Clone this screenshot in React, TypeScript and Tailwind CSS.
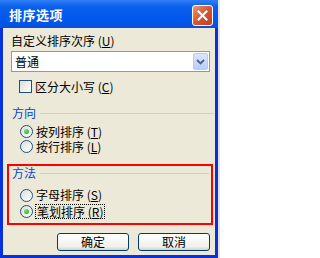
import React from "react";

const font = { fontFamily: '"Noto Sans CJK SC", "Noto Sans", sans-serif' };

function Mnemonic({ text, letter }: { text: string; letter: string }) {
  return (
    <span>
      {text} (<span className="underline underline-offset-1">{letter}</span>)
    </span>
  );
}

function Radio({ checked }: { checked?: boolean }) {
  return (
    <span className="w-[13px] h-[13px] rounded-full border border-[#1c5180] bg-[linear-gradient(135deg,#dcdcd7,#ffffff)] flex items-center justify-center shrink-0">
      {checked && (
        <span className="w-[5px] h-[5px] rounded-full bg-[radial-gradient(circle_at_35%_35%,#7be07b,#21a121)]" />
      )}
    </span>
  );
}

function GroupTitle({ label }: { label: string }) {
  return (
    <div className="flex items-center h-[14px] gap-[4px]">
      <span className="text-[#0046d5]">{label}</span>
      <span className="flex-1 h-px bg-[#d0d0bf] mr-[1px]" />
    </div>
  );
}

function Button({ label }: { label: string }) {
  return (
    <button className="w-[72px] h-[18px] rounded-[3px] border border-[#003c74] bg-[linear-gradient(to_bottom,#ffffff,#f0f0ea_80%,#d6d0c5)] text-[12px] leading-none text-black flex items-center justify-center">
      {label}
    </button>
  );
}

export default function App() {
  return (
    <div className="w-[220px] h-[258px] bg-[#e6e3f0] overflow-hidden text-[12px] leading-[14px] text-black" style={font}>
      <div className="w-[218px] h-[258px] bg-[#0831d9] flex flex-col">
        {/* Title bar */}
        <div className="h-[28px] flex items-center justify-between pl-[9px] pr-[5px] pt-[2px] bg-[linear-gradient(to_bottom,#2f7ff5,#0a5fec_25%,#0058ee_70%,#0a4fd8)]">
          <span className="text-white font-bold text-[13px] tracking-[0.5px]">排序选项</span>
          <span className="w-[21px] h-[21px] rounded-[3px] border border-white bg-[linear-gradient(135deg,#ec9a7c,#d4552f_50%,#c0401f)] flex items-center justify-center">
            <svg width="11" height="11" viewBox="0 0 11 11">
              <path d="M1.5 1.5 L9.5 9.5 M9.5 1.5 L1.5 9.5" stroke="white" strokeWidth="2" strokeLinecap="square" />
            </svg>
          </span>
        </div>

        {/* Client area */}
        <div className="flex-1 mx-[3px] mb-[3px] bg-[#ece9d8] flex flex-col">
          <div className="mt-[6px] ml-[8px] h-[14px]">
            <Mnemonic text="自定义排序次序" letter="U" />
          </div>

          {/* Combobox */}
          <div className="mt-[3px] ml-[8px] w-[199px] h-[21px] bg-white border border-[#7f9db9] flex items-center justify-between">
            <span className="ml-[3px]">普通</span>
            <span className="w-[15px] h-[17px] mr-[1px] rounded-[2px] border border-[#b9cbf3] bg-[linear-gradient(to_bottom,#dce6fd,#b6cdfb)] flex items-center justify-center">
              <svg width="9" height="6" viewBox="0 0 9 6">
                <path d="M1 1 L4.5 4.5 L8 1" fill="none" stroke="#4d6185" strokeWidth="1.8" />
              </svg>
            </span>
          </div>

          {/* Checkbox */}
          <div className="mt-[8px] ml-[16px] h-[13px] flex items-center gap-[3px]">
            <span className="w-[13px] h-[13px] border border-[#1c5180] bg-[linear-gradient(135deg,#dcdcd7,#ffffff)] shrink-0" />
            <Mnemonic text="区分大小写" letter="C" />
          </div>

          {/* Direction */}
          <div className="mt-[13px] ml-[9px]">
            <GroupTitle label="方向" />
          </div>
          <div className="mt-[4px] ml-[17px] h-[15px] flex items-center gap-[3px]">
            <Radio checked />
            <Mnemonic text="按列排序" letter="T" />
          </div>
          <div className="ml-[17px] h-[15px] flex items-center gap-[3px]">
            <Radio />
            <Mnemonic text="按行排序" letter="L" />
          </div>

          {/* Method (highlighted) */}
          <div className="mt-[10px] ml-[4px] w-[206px] h-[61px] border-2 border-[#ff0000] flex flex-col">
            <div className="ml-[3px] mr-[1px]">
              <GroupTitle label="方法" />
            </div>
            <div className="mt-[7px] ml-[11px] h-[16px] flex items-center gap-[3px]">
              <Radio />
              <Mnemonic text="字母排序" letter="S" />
            </div>
            <div className="ml-[11px] h-[16px] flex items-center gap-[2px]">
              <Radio checked />
              <span className="border border-dotted border-black px-[1px] leading-[13px]">
                <Mnemonic text="笔划排序" letter="R" />
              </span>
            </div>
          </div>

          {/* Buttons */}
          <div className="mt-[8px] ml-[54px] flex gap-[9px]">
            <Button label="确定" />
            <Button label="取消" />
          </div>
        </div>
      </div>
    </div>
  );
}
